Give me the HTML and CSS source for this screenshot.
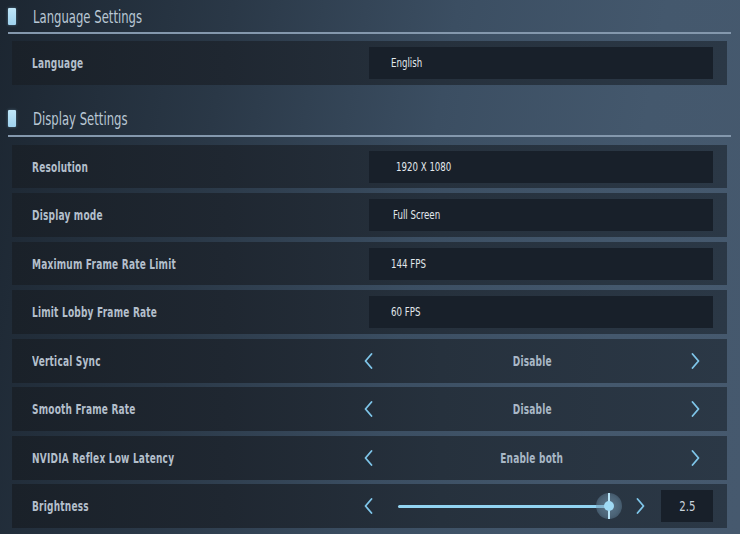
FILE: index.html
```html
<!DOCTYPE html>
<html>
<head>
<meta charset="utf-8">
<link rel="stylesheet" href="styles.css">
</head>
<body>
<div class="page">
  <div class="section-head"><span class="mark"></span><span class="head-title">Language Settings</span></div>
  <div class="rows first">
    <div class="row"><span class="label"><span class="txt">Language</span></span><div class="control"><div class="value"><span class="vtxt">English</span></div></div></div>
  </div>

  <div class="section-head second"><span class="mark"></span><span class="head-title">Display Settings</span></div>
  <div class="rows">
    <div class="row"><span class="label"><span class="txt">Resolution</span></span><div class="control"><div class="value v-res"><span class="vtxt">1920 X 1080</span></div></div></div>
    <div class="row"><span class="label"><span class="txt">Display mode</span></span><div class="control"><div class="value v-mode"><span class="vtxt">Full Screen</span></div></div></div>
    <div class="row"><span class="label"><span class="txt">Maximum Frame Rate Limit</span></span><div class="control"><div class="value"><span class="vtxt">144 FPS</span></div></div></div>
    <div class="row"><span class="label"><span class="txt">Limit Lobby Frame Rate</span></span><div class="control"><div class="value"><span class="vtxt">60 FPS</span></div></div></div>
    <div class="row"><span class="label"><span class="txt">Vertical Sync</span></span>
      <div class="control choice">
        <span class="arrow left"><svg width="9" height="16" viewBox="0 0 9 16"><polyline points="7.5,1 1.5,8 7.5,15"/></svg></span>
        <span class="choice-text"><span class="ctxt">Disable</span></span>
        <span class="arrow right"><svg width="9" height="16" viewBox="0 0 9 16"><polyline points="1.5,1 7.5,8 1.5,15"/></svg></span>
      </div>
    </div>
    <div class="row"><span class="label"><span class="txt">Smooth Frame Rate</span></span>
      <div class="control choice">
        <span class="arrow left"><svg width="9" height="16" viewBox="0 0 9 16"><polyline points="7.5,1 1.5,8 7.5,15"/></svg></span>
        <span class="choice-text"><span class="ctxt">Disable</span></span>
        <span class="arrow right"><svg width="9" height="16" viewBox="0 0 9 16"><polyline points="1.5,1 7.5,8 1.5,15"/></svg></span>
      </div>
    </div>
    <div class="row"><span class="label"><span class="txt">NVIDIA Reflex Low Latency</span></span>
      <div class="control choice">
        <span class="arrow left"><svg width="9" height="16" viewBox="0 0 9 16"><polyline points="7.5,1 1.5,8 7.5,15"/></svg></span>
        <span class="choice-text"><span class="ctxt">Enable both</span></span>
        <span class="arrow right"><svg width="9" height="16" viewBox="0 0 9 16"><polyline points="1.5,1 7.5,8 1.5,15"/></svg></span>
      </div>
    </div>
    <div class="row"><span class="label"><span class="txt">Brightness</span></span>
      <div class="control slider-ctl">
        <span class="arrow left"><svg width="9" height="16" viewBox="0 0 9 16"><polyline points="7.5,1 1.5,8 7.5,15"/></svg></span>
        <div class="slider">
          <div class="track">
            <span class="knob"><span class="knob-line"></span><span class="knob-dot"></span></span>
          </div>
        </div>
        <span class="arrow small"><svg width="9" height="16" viewBox="0 0 9 16"><polyline points="1.5,1 7.5,8 1.5,15"/></svg></span>
        <div class="num"><span class="ntxt">2.5</span></div>
      </div>
    </div>
  </div>
</div>
</body>
</html>
```

FILE: styles.css
```css
html, body {
  margin: 0;
  padding: 0;
}
body {
  width: 740px;
  height: 534px;
  overflow: hidden;
  background: linear-gradient(100deg, #1c2631 0%, #2a3847 28%, #3b4e62 55%, #44586d 80%, #46596e 100%);
  font-family: "DejaVu Sans Condensed", "Liberation Sans", sans-serif;
}
.page {
  padding: 0 9px 0 8px;
}
.section-head {
  display: flex;
  align-items: center;
  height: 32px;
  border-bottom: 2px solid #8498ad;
}
.section-head.second {
  margin-top: 18px;
}
.mark {
  width: 8px;
  height: 17px;
  background: linear-gradient(#bfe6f8, #9fd2ee);
  border-radius: 1px;
  box-shadow: 0 0 3px rgba(160, 215, 245, 0.4);
}
.head-title {
  display: inline-block;
  margin-left: 17px;
  font-size: 18px;
  color: #b9c7d4;
  transform: scaleX(0.72);
  transform-origin: left center;
  white-space: nowrap;
}
.rows {
  margin: 8px 0 0 4px;
  width: 715px;
  display: flex;
  flex-direction: column;
  gap: 4.85px;
}
.rows.first {
  margin-top: 7px;
}
.row {
  height: 43.7px;
  display: flex;
  align-items: center;
  padding-left: 20px;
  background: linear-gradient(to right, #1a2129 0%, #1f2731 30%, #26313d 60%, #2b3846 100%);
}
.label {
  flex: 1;
  font-size: 14.5px;
  font-weight: bold;
  color: #b3bfcb;
  letter-spacing: 0.3px;
  white-space: nowrap;
}
.txt {
  display: inline-block;
  transform: scaleX(0.69);
  transform-origin: left center;
}
.control {
  width: 355px;
  margin-right: 14px;
  display: flex;
  align-items: center;
}
.value {
  margin-left: 11px;
  flex: 1;
  height: 32px;
  display: flex;
  align-items: center;
  padding-left: 22px;
  background: #18202a;
  color: #e2e8ec;
  font-size: 12px;
  white-space: nowrap;
}
.vtxt {
  display: inline-block;
  transform: scaleX(0.8);
  transform-origin: left center;
}
.value.v-res { padding-left: 27px; }
.value.v-mode { padding-left: 24px; }
.arrow {
  width: 20px;
  display: flex;
  justify-content: center;
  align-items: center;
}
.arrow.right {
  width: 36px;
}
.arrow svg polyline {
  fill: none;
  stroke: #7fc6ea;
  stroke-width: 1.8;
  stroke-linecap: round;
  stroke-linejoin: round;
}
.choice-text {
  flex: 1;
  text-align: center;
  padding-left: 9px;
  font-size: 14.5px;
  font-weight: bold;
  color: #a9b8c6;
  letter-spacing: 0.3px;
  white-space: nowrap;
}
.ctxt {
  display: inline-block;
  transform: scaleX(0.69);
  transform-origin: center center;
}
.slider {
  flex: 1;
  padding: 0 21px 0 20px;
}
.track {
  position: relative;
  height: 3px;
  border-radius: 2px;
  background: #92d4f2;
}
.knob {
  position: absolute;
  right: -13px;
  top: -12px;
  width: 26px;
  height: 26px;
  border-radius: 50%;
  background: radial-gradient(circle, rgba(130, 165, 190, 0.6) 0%, rgba(110, 145, 170, 0.5) 55%, rgba(90, 120, 145, 0.25) 100%);
}
.knob-line {
  position: absolute;
  left: 12px;
  top: 0;
  width: 2px;
  height: 26px;
  background: #b8e4f7;
}
.knob-dot {
  position: absolute;
  left: 8px;
  top: 8.5px;
  width: 10px;
  height: 10px;
  border-radius: 50%;
  background: #9fdaf5;
}
.arrow.small {
  width: 20px;
}
.num {
  margin-left: 11px;
  width: 52px;
  height: 32px;
  background: #18202a;
  color: #c9d3dc;
  font-size: 14.5px;
  display: flex;
  align-items: center;
  justify-content: center;
}
.ntxt {
  display: inline-block;
  transform: scaleX(0.78);
}
```
